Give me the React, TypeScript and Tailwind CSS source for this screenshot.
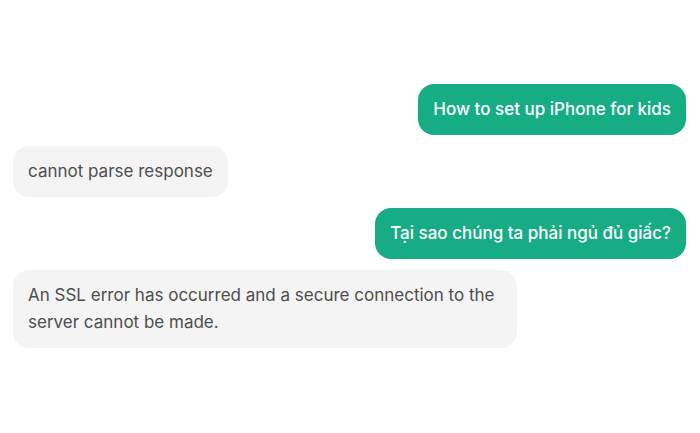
import React from 'react';

type Msg = { id: number; text: string; mine: boolean };

const messages: Msg[] = [
  { id: 1, text: 'How to set up iPhone for kids', mine: true },
  { id: 2, text: 'cannot parse response', mine: false },
  { id: 3, text: 'Tại sao chúng ta phải ngủ đủ giấc?', mine: true },
  { id: 4, text: 'An SSL error has occurred and a secure connection to the server cannot be made.', mine: false },
];

const App: React.FC = () => {
  return (
    <div className="w-[700px] h-[433px] bg-white font-['Inter','Noto_Sans',sans-serif] overflow-hidden">
      <div className="flex flex-col gap-[11px] pt-[84px] pl-[13px] pr-[14px]">
        {messages.map((m) => (
          <div key={m.id} className={`flex ${m.mine ? 'justify-end' : 'justify-start'}`}>
            <div
              className={`max-w-[504px] rounded-[16px] px-[15px] py-[12px] text-[17px] leading-[27px] ${
                m.mine ? 'bg-[#17ad84] text-white font-medium' : 'bg-[#f4f4f4] text-[#4d4d4d]'
              }`}
            >
              {m.text}
            </div>
          </div>
        ))}
      </div>
    </div>
  );
};

export default App;
